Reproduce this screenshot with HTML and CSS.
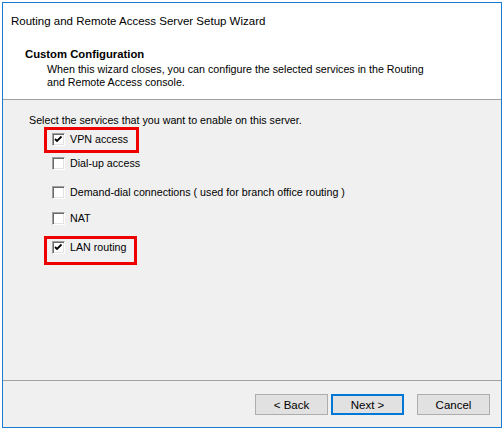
FILE: index.html
```html
<!DOCTYPE html>
<html>
<head>
<meta charset="utf-8">
<link rel="stylesheet" href="styles.css">
</head>
<body>
<div class="window">
  <div class="header">
    <div class="title">Routing and Remote Access Server Setup Wizard</div>
    <div class="heading">Custom Configuration</div>
    <div class="desc">When this wizard closes, you can configure the selected services in the Routing<br>and Remote Access console.</div>
  </div>
  <div class="content">
    <div class="prompt">Select the services that you want to enable on this server.</div>
    <div class="options">
      <div class="row row-vpn">
        <span class="box checked"><svg width="11" height="11" viewBox="0 0 11 11"><path d="M2 5 L4 7 L8.5 2.5" fill="none" stroke="#000" stroke-width="1.8"/></svg></span>
        <span class="label">VPN access</span>
        <span class="mark mark-vpn"></span>
      </div>
      <div class="row row-dial">
        <span class="box"></span>
        <span class="label">Dial-up access</span>
      </div>
      <div class="row row-demand">
        <span class="box"></span>
        <span class="label">Demand-dial connections ( used for branch office routing )</span>
      </div>
      <div class="row row-nat">
        <span class="box"></span>
        <span class="label">NAT</span>
      </div>
      <div class="row row-lan">
        <span class="box checked"><svg width="11" height="11" viewBox="0 0 11 11"><path d="M2 5 L4 7 L8.5 2.5" fill="none" stroke="#000" stroke-width="1.8"/></svg></span>
        <span class="label">LAN routing</span>
        <span class="mark mark-lan"></span>
      </div>
    </div>
  </div>
  <div class="footer">
    <button class="btn">&lt; Back</button>
    <button class="btn btn-default">Next &gt;</button>
    <button class="btn btn-cancel">Cancel</button>
  </div>
</div>
</body>
</html>
```
FILE: styles.css
```css
html, body {
  margin: 0;
  padding: 0;
  background: #ffffff;
  width: 504px;
  height: 431px;
  overflow: hidden;
}
body {
  font-family: "Liberation Sans", Arial, sans-serif;
  font-size: 10.7px;
  color: #000;
}
.window {
  box-sizing: border-box;
  margin: 2px 0 0 2px;
  width: 500px;
  height: 426px;
  border: 1px solid #1a7bd0;
  display: flex;
  flex-direction: column;
  background: #f0f0f0;
}
.header {
  background: #ffffff;
  height: 97px;
  border-bottom: 1px solid #a0a0a0;
  padding: 11px 0 0 8px;
  box-sizing: border-box;
  flex: none;
}
.title {
  font-size: 11.5px;
  line-height: 14px;
}
.heading {
  font-weight: bold;
  font-size: 11.3px;
  line-height: 13px;
  margin: 20px 0 0 14px;
}
.desc {
  margin: 2px 0 0 36px;
  line-height: 13px;
}
.content {
  flex: 1;
  padding: 14px 0 0 26px;
}
.prompt {
  line-height: 13px;
}
.options {
  padding-left: 23px;
}
.row {
  position: relative;
  display: flex;
  align-items: center;
  height: 17px;
}
.row-vpn { margin-top: 4px; }
.row-dial { margin-top: 7px; }
.row-demand { margin-top: 12px; }
.row-nat { margin-top: 9px; }
.row-lan { margin-top: 12px; }
.box {
  box-sizing: border-box;
  width: 13px;
  height: 13px;
  flex: none;
  background: #fff;
  border: 1px solid;
  border-color: #a0a0a0 #ffffff #ffffff #a0a0a0;
  box-shadow: inset 1px 1px 0 #696969, inset -1px -1px 0 #e3e3e3;
  display: flex;
  align-items: center;
  justify-content: center;
  padding: 0;
}
.box svg {
  display: block;
}
.label {
  margin-left: 5px;
  line-height: 13px;
  white-space: nowrap;
}
.mark {
  position: absolute;
  border: 3px solid #ee0000;
  box-sizing: border-box;
}
.mark-vpn {
  left: -8px;
  top: -4px;
  width: 95px;
  height: 26px;
}
.mark-lan {
  left: -8px;
  top: -3px;
  width: 93px;
  height: 29px;
}
.footer {
  flex: none;
  height: 47px;
  border-top: 1px solid #a0a0a0;
  box-sizing: border-box;
  display: flex;
  justify-content: flex-end;
  align-items: flex-start;
  padding: 13px 11px 0 0;
}
.btn {
  box-sizing: border-box;
  width: 73px;
  height: 21px;
  background: #e1e1e1;
  border: 1px solid #adadad;
  font-family: "Liberation Sans", Arial, sans-serif;
  font-size: 11.5px;
  color: #000;
  padding: 0;
  margin: 0;
}
.btn-default {
  border: 2px solid #0078d7;
  margin-left: 3px;
}
.btn-cancel {
  margin-left: 13px;
}
```
